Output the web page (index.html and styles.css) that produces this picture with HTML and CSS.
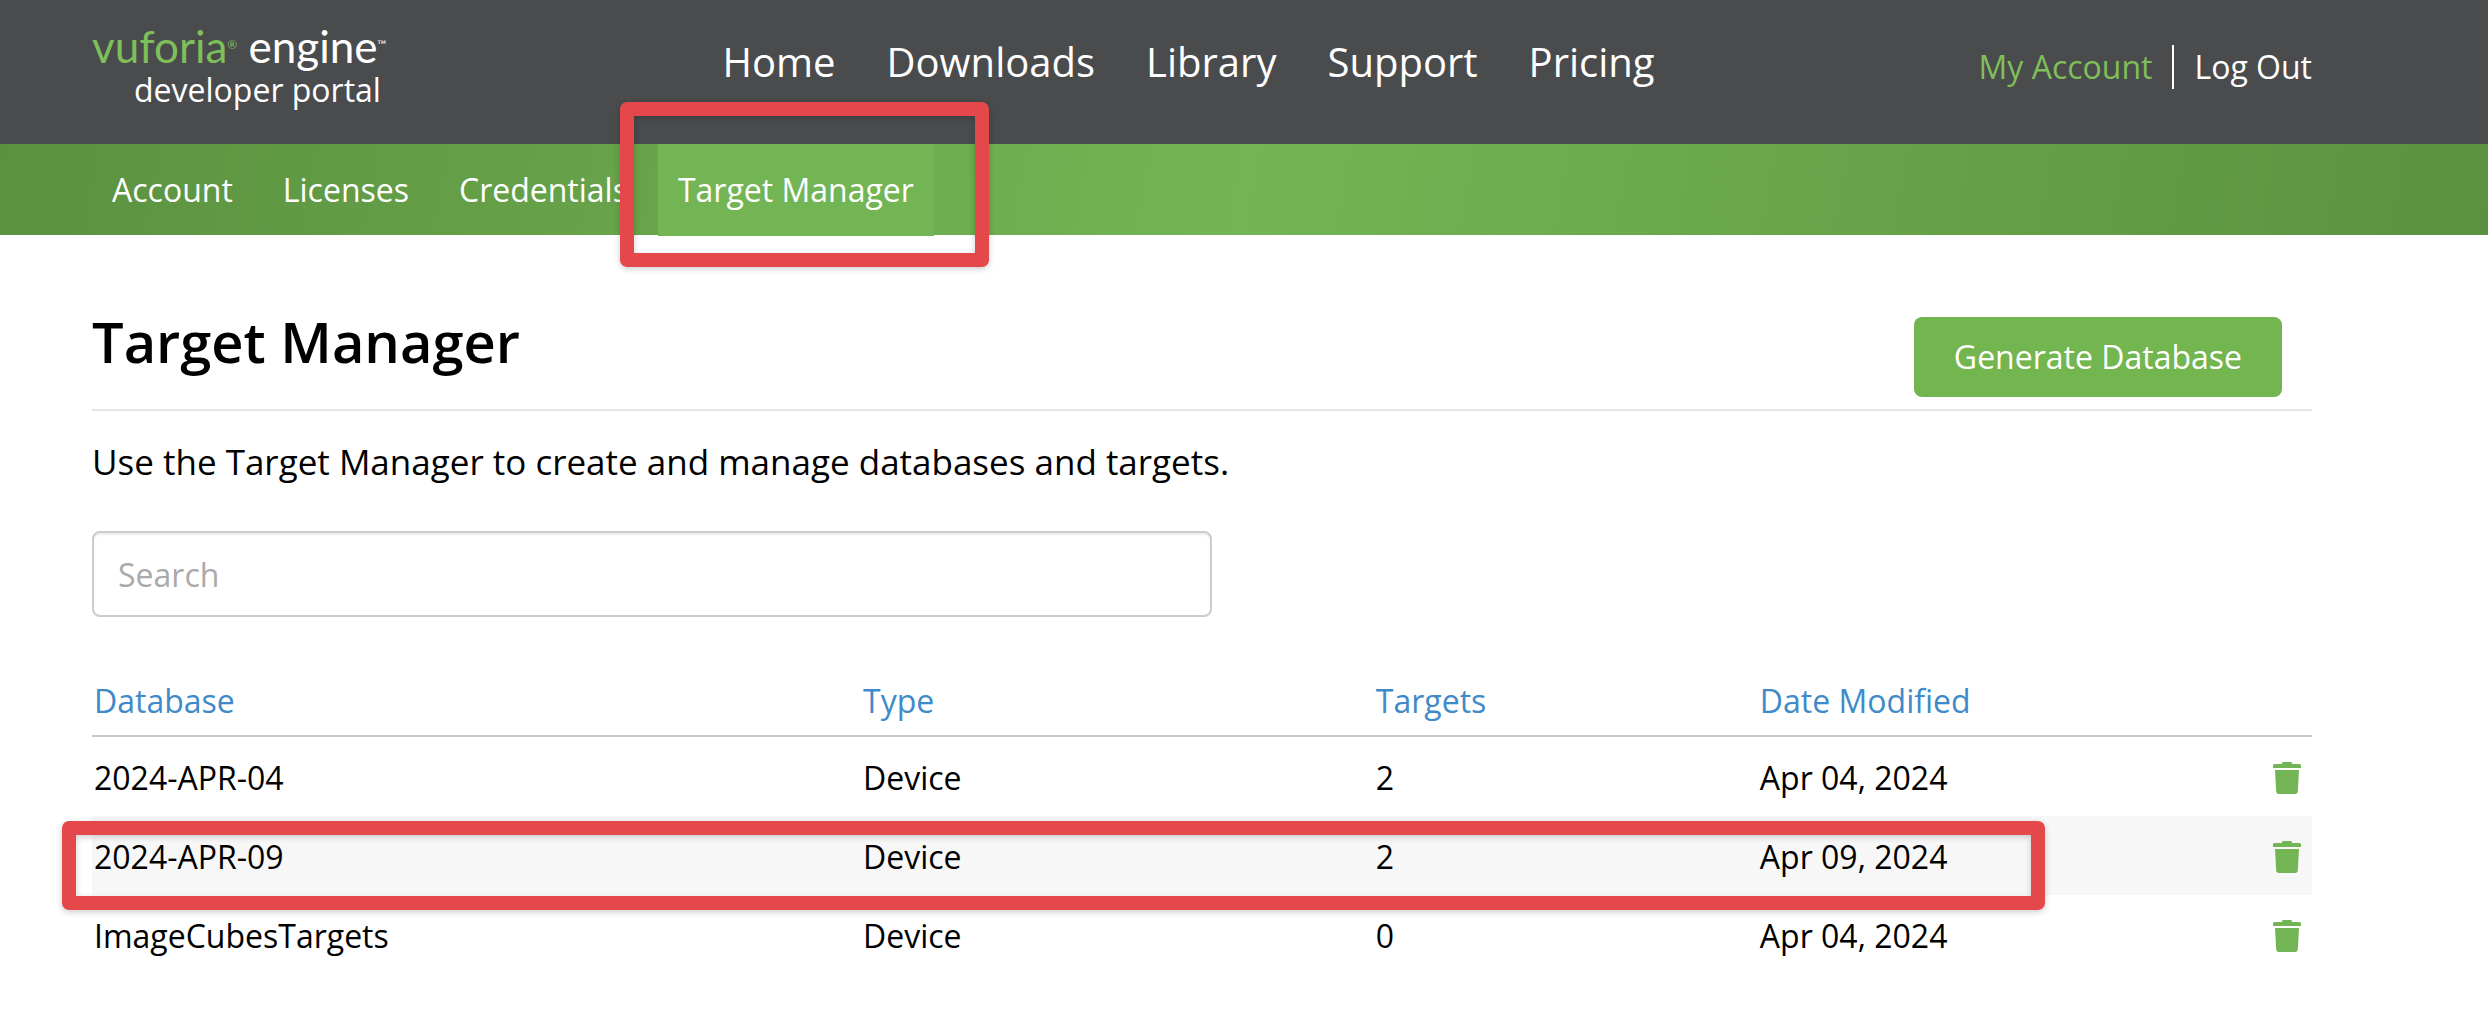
FILE: index.html
```html
<!DOCTYPE html>
<html lang="en">
<head>
<meta charset="utf-8">
<title>Target Manager | Vuforia Engine Developer Portal</title>
<link rel="stylesheet" href="styles.css">
</head>
<body>
<svg class="sprite" aria-hidden="true">
  <symbol id="trash" viewBox="0 0 28 32">
    <path d="M1.500 2H9V1.200Q9 0 10.200 0H17.800Q19 0 19 1.200V2H26.500Q28 2 28 3.500V6H0V3.500Q0 2 1.500 2Z"/>
    <path d="M2 8H26L24.800 29.200Q24.600 32 21.800 32H6.200Q3.400 32 3.200 29.200Z"/>
  </symbol>
</svg>

<header class="header">
  <a class="brand" href="#">
    <span class="brand-name"><span class="brand-green">vuforia<span class="mark">®</span></span> engine<span class="mark">™</span></span>
    <span class="brand-sub">developer portal</span>
  </a>
  <nav class="main-nav">
    <a href="#">Home</a>
    <a href="#">Downloads</a>
    <a href="#">Library</a>
    <a href="#">Support</a>
    <a href="#">Pricing</a>
  </nav>
  <div class="user-nav">
    <a class="my-account" href="#">My Account</a>
    <a class="log-out" href="#">Log Out</a>
  </div>
</header>

<nav class="sub-nav">
  <a href="#">Account</a>
  <a href="#">Licenses</a>
  <a href="#">Credentials</a>
  <a class="active" href="#">Target Manager<span class="highlight highlight-tab"></span></a>
</nav>

<main class="page">
  <div class="page-head">
    <h1>Target Manager</h1>
    <button class="primary" type="button">Generate Database</button>
  </div>
  <p class="intro">Use the Target Manager to create and manage databases and targets.</p>
  <input class="search" type="text" placeholder="Search" aria-label="Search">

  <table class="databases">
    <colgroup>
      <col class="col-name"><col class="col-type"><col class="col-targets"><col class="col-date"><col class="col-action">
    </colgroup>
    <thead>
      <tr>
        <th><a href="#">Database</a></th>
        <th><a href="#">Type</a></th>
        <th><a href="#">Targets</a></th>
        <th><a href="#">Date Modified</a></th>
        <th></th>
      </tr>
    </thead>
    <tbody>
      <tr>
        <td>2024-APR-04</td><td>Device</td><td>2</td><td>Apr 04, 2024</td>
        <td class="action"><button class="delete" type="button" aria-label="Delete 2024-APR-04"><svg><use href="#trash"/></svg></button></td>
      </tr>
      <tr>
        <td>2024-APR-09<span class="highlight highlight-row"></span></td><td>Device</td><td>2</td><td>Apr 09, 2024</td>
        <td class="action"><button class="delete" type="button" aria-label="Delete 2024-APR-09"><svg><use href="#trash"/></svg></button></td>
      </tr>
      <tr>
        <td>ImageCubesTargets</td><td>Device</td><td>0</td><td>Apr 04, 2024</td>
        <td class="action"><button class="delete" type="button" aria-label="Delete ImageCubesTargets"><svg><use href="#trash"/></svg></button></td>
      </tr>
    </tbody>
  </table>
</main>
</body>
</html>
```
FILE: styles.css
```css
* {
  box-sizing: border-box;
}

body {
  margin: 0;
  background: #fff;
  color: #000;
  font-family: "Open Sans", "Noto Sans", sans-serif;
  font-size: 32px;
  line-height: 44px;
}

a {
  color: inherit;
  text-decoration: none;
}

.sprite {
  display: none;
}

.header,
.sub-nav,
.page {
  padding-left: 92px;
  padding-right: 176px;
}

/* Header */

.header {
  display: flex;
  align-items: flex-start;
  height: 144px;
  background: #4a4b4d;
  color: #fff;
}

.brand {
  display: flex;
  flex-direction: column;
  align-items: flex-start;
  flex: 0 0 28.4%;
  padding-top: 24px;
}

.brand-name {
  font-family: Lato, "Open Sans", sans-serif;
  font-size: 44px;
  line-height: 44px;
  white-space: nowrap;
}

.brand-green {
  color: #7fbf5a;
}

.mark {
  font-size: 12px;
  line-height: 12px;
  vertical-align: 14px;
}

.brand-sub {
  padding-left: 42px;
}

.main-nav {
  display: flex;
  gap: 51px;
  padding-top: 35px;
  font-size: 40px;
  line-height: 54px;
}

.user-nav {
  display: flex;
  align-items: center;
  margin-left: auto;
  padding-top: 45px;
  white-space: nowrap;
}

.my-account {
  padding-right: 20px;
  color: #7fbf5a;
}

.log-out {
  padding-left: 20px;
  border-left: 2px solid #fff;
}

/* Section tabs */

.sub-nav {
  display: flex;
  align-items: flex-start;
  gap: 10px;
  height: 91px;
  background: linear-gradient(100deg, #5b9140, #73b554 50%, #5b9140);
  color: #fff;
  line-height: 92px;
}

.sub-nav a {
  position: relative;
  padding: 0 20px;
  white-space: nowrap;
}

.sub-nav .active {
  background: #73b554;
}

/* Callout frames */

.highlight {
  position: absolute;
  z-index: 1;
  border: 14px solid #e4484b;
  border-radius: 7px;
  box-shadow: 0 2px 6px rgba(0, 0, 0, 0.2), inset 0 2px 6px rgba(0, 0, 0, 0.2);
  pointer-events: none;
}

.highlight-tab {
  inset: -42px -55px -31px -38px;
}

.highlight-row {
  inset: 5px 267px -15px -30px;
}

/* Page */

.page-head {
  display: flex;
  justify-content: space-between;
  align-items: flex-end;
  height: 176px;
  padding: 0 30px 12px 0;
  border-bottom: 2px solid #e5e5e5;
}

h1 {
  margin: 0 0 18px;
  font-size: 56px;
  font-weight: 600;
  line-height: 76px;
}

.primary {
  height: 80px;
  padding: 0 40px;
  border: 0;
  border-radius: 8px;
  background: #73b54f;
  color: #fff;
  font: inherit;
}

.intro {
  margin: 26px 0 44px;
  font-size: 35px;
  line-height: 50px;
}

.search {
  display: block;
  width: 50%;
  min-width: 1120px;
  height: 86px;
  padding: 0 24px;
  border: 2px solid #ccc;
  border-radius: 8px;
  box-shadow: inset 0 2px 2px rgba(0, 0, 0, 0.08);
  color: #000;
  font: inherit;
}

.search::placeholder {
  color: #aaa;
  opacity: 1;
}

/* Table */

.databases {
  width: 100%;
  margin-top: 56px;
  border-collapse: separate;
  border-spacing: 0;
  table-layout: fixed;
}

.col-name {
  width: 34.64%;
}

.col-type {
  width: 23.1%;
}

.col-targets {
  width: 17.3%;
}

.col-action {
  width: 10%;
}

.databases th {
  padding: 6px 2px 12px;
  border-bottom: 2px solid #c8c8c8;
  color: #3f8ac9;
  font-weight: 400;
  text-align: left;
}

.databases td {
  height: 79px;
  padding: 2px 2px 0;
}

.databases tbody tr {
  position: relative;
}

.databases tbody tr:nth-child(even) {
  background: #f7f7f7;
}

.databases .action {
  padding-right: 11px;
  text-align: right;
}

.delete {
  display: block;
  margin-left: auto;
  padding: 0;
  border: 0;
  background: none;
}

.delete svg {
  display: block;
  width: 28px;
  height: 32px;
  fill: #73b554;
}
```
